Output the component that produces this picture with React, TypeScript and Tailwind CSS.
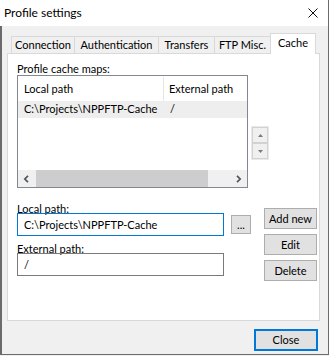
function Chevron({ dir }: { dir: 'left' | 'right' }) {
  return (
    <svg width="7" height="8" viewBox="0 0 7 8">
      {dir === 'left' ? (
        <polyline points="5,0.8 1.8,4 5,7.2" fill="none" stroke="#555555" strokeWidth="1.7" />
      ) : (
        <polyline points="2,0.8 5.2,4 2,7.2" fill="none" stroke="#555555" strokeWidth="1.7" />
      )}
    </svg>
  );
}

function Tri({ up }: { up: boolean }) {
  return (
    <svg width="5" height="3" viewBox="0 0 5 3">
      {up ? <polygon points="0,3 5,3 2.5,0" fill="#7a7a7a" /> : <polygon points="0,0 5,0 2.5,3" fill="#7a7a7a" />}
    </svg>
  );
}

function Tab({ label, w }: { label: string; w: string }) {
  return (
    <div className={`${w} h-[17px] mb-[1px] border-l border-t border-[#d9d9d9] bg-[#f0f0f0] flex justify-center leading-[15px] whitespace-nowrap`}>
      {label}
    </div>
  );
}

export default function App() {
  return (
    <div className="w-[329px] h-[356px] bg-[#f0f0f0] font-[family-name:Lato] text-[11px] text-black overflow-hidden">
      <div className="h-[355px] border-r border-b border-[#6b6b6b] flex flex-col">
        {/* Title bar */}
        <div className="h-[26px] bg-white flex items-center justify-between pl-[4px] pr-[10px] shrink-0">
          <span className="leading-[26px] text-[12px]">Profile settings</span>
          <svg width="10" height="10" viewBox="0 0 10 10">
            <line x1="0.5" y1="0.5" x2="9.5" y2="9.5" stroke="#111" strokeWidth="1" />
            <line x1="9.5" y1="0.5" x2="0.5" y2="9.5" stroke="#111" strokeWidth="1" />
          </svg>
        </div>

        {/* Body */}
        <div className="flex-1 border-l-2 border-[#6b6b6b] pl-[5px] pt-[7px] flex flex-col">
          {/* Tabs */}
          <div className="h-[21px] -mb-[1px] ml-[4px] flex items-end relative z-10">
            <Tab label="Connection" w="w-[63px]" />
            <Tab label="Authentication" w="w-[84px]" />
            <Tab label="Transfers" w="w-[56px]" />
            <Tab label="FTP Misc." w="w-[56px]" />
            <div className="w-[46px] h-[21px] border-l border-t border-r border-[#d9d9d9] bg-white flex justify-center leading-[18px]">
              Cache
            </div>
          </div>

          {/* Panel */}
          <div className="w-[313px] h-[268px] bg-white border border-[#d9d9d9] pl-[9px] flex flex-col">
            <div className="mt-[8px] h-[13px] leading-[13px]">Profile cache maps:</div>

            <div className="flex items-start">
              {/* List view */}
              <div className="w-[231px] h-[113px] border border-[#828790] flex flex-col bg-white">
                <div className="h-[25px] flex">
                  <div className="w-[145px] pl-[6px] pt-[1px] leading-[24px]">Local path</div>
                  <div className="w-px h-[24px] mt-[1px] bg-[#e5e5e5]" />
                  <div className="flex-1 pl-[5px] pt-[1px] leading-[24px]">External path</div>
                </div>
                <div className="h-[17px] bg-[#eeeeee] flex leading-[16px]">
                  <div className="w-[146px] pl-[6px] whitespace-nowrap">C:\Projects\NPPFTP-Cache</div>
                  <div className="flex-1 pl-[6px]">/</div>
                </div>
                <div className="flex-1" />
                <div className="h-[17px] bg-[#f0f0f0] flex items-center">
                  <div className="w-[17px] h-[17px] flex items-center justify-center">
                    <Chevron dir="left" />
                  </div>
                  <div className="w-[1px]" />
                  <div className="w-[172px] h-[17px] bg-[#cdcdcd]" />
                  <div className="flex-1" />
                  <div className="w-[17px] h-[17px] flex items-center justify-center">
                    <Chevron dir="right" />
                  </div>
                </div>
              </div>

              {/* Spin */}
              <div className="ml-[3px] mt-[51px] p-px bg-[#e9e9e9] flex flex-col">
                <div className="w-[16px] h-[16px] border border-[#d2d2d2] bg-[#f0f0f0] flex items-center justify-center">
                  <Tri up />
                </div>
                <div className="w-[16px] h-[16px] border border-[#d2d2d2] bg-[#f0f0f0] flex items-center justify-center">
                  <Tri up={false} />
                </div>
              </div>
            </div>

            {/* Lower section */}
            <div className="flex items-start">
              <div className="mt-[12px] flex flex-col">
                <div className="h-[13px] leading-[17px]">Local path:</div>
                <div className="w-[207px] h-[23px] border border-[#0078d7] pl-[6px] leading-[21px] whitespace-nowrap">
                  C:\Projects\NPPFTP-Cache
                </div>
                <div className="mt-[4px] h-[13px] leading-[17px]">External path:</div>
                <div className="w-[207px] h-[23px] border border-[#7a7a7a] pl-[6px] leading-[21px]">/</div>
              </div>
              <div className="ml-[7px] mt-[27px] w-[20px] h-[19px] border border-[#adadad] bg-[#e1e1e1] flex justify-center leading-[17px]">
                ...
              </div>
              <div className="ml-[13px] mt-[20px] flex flex-col gap-[5px]">
                <div className="w-[53px] h-[21px] border border-[#adadad] bg-[#e1e1e1] flex justify-center leading-[19px] whitespace-nowrap">
                  Add new
                </div>
                <div className="w-[53px] h-[21px] border border-[#adadad] bg-[#e1e1e1] flex justify-center leading-[19px]">
                  Edit
                </div>
                <div className="w-[53px] h-[21px] border border-[#adadad] bg-[#e1e1e1] flex justify-center leading-[19px]">
                  Delete
                </div>
              </div>
            </div>
          </div>

          {/* Footer */}
          <div className="w-[313px] mt-[8px] flex justify-end pr-[2px]">
            <div className="w-[64px] h-[22px] border-2 border-[#0078d7] bg-[#e1e1e1] flex justify-center leading-[18px]">
              Close
            </div>
          </div>
        </div>
      </div>
    </div>
  );
}
